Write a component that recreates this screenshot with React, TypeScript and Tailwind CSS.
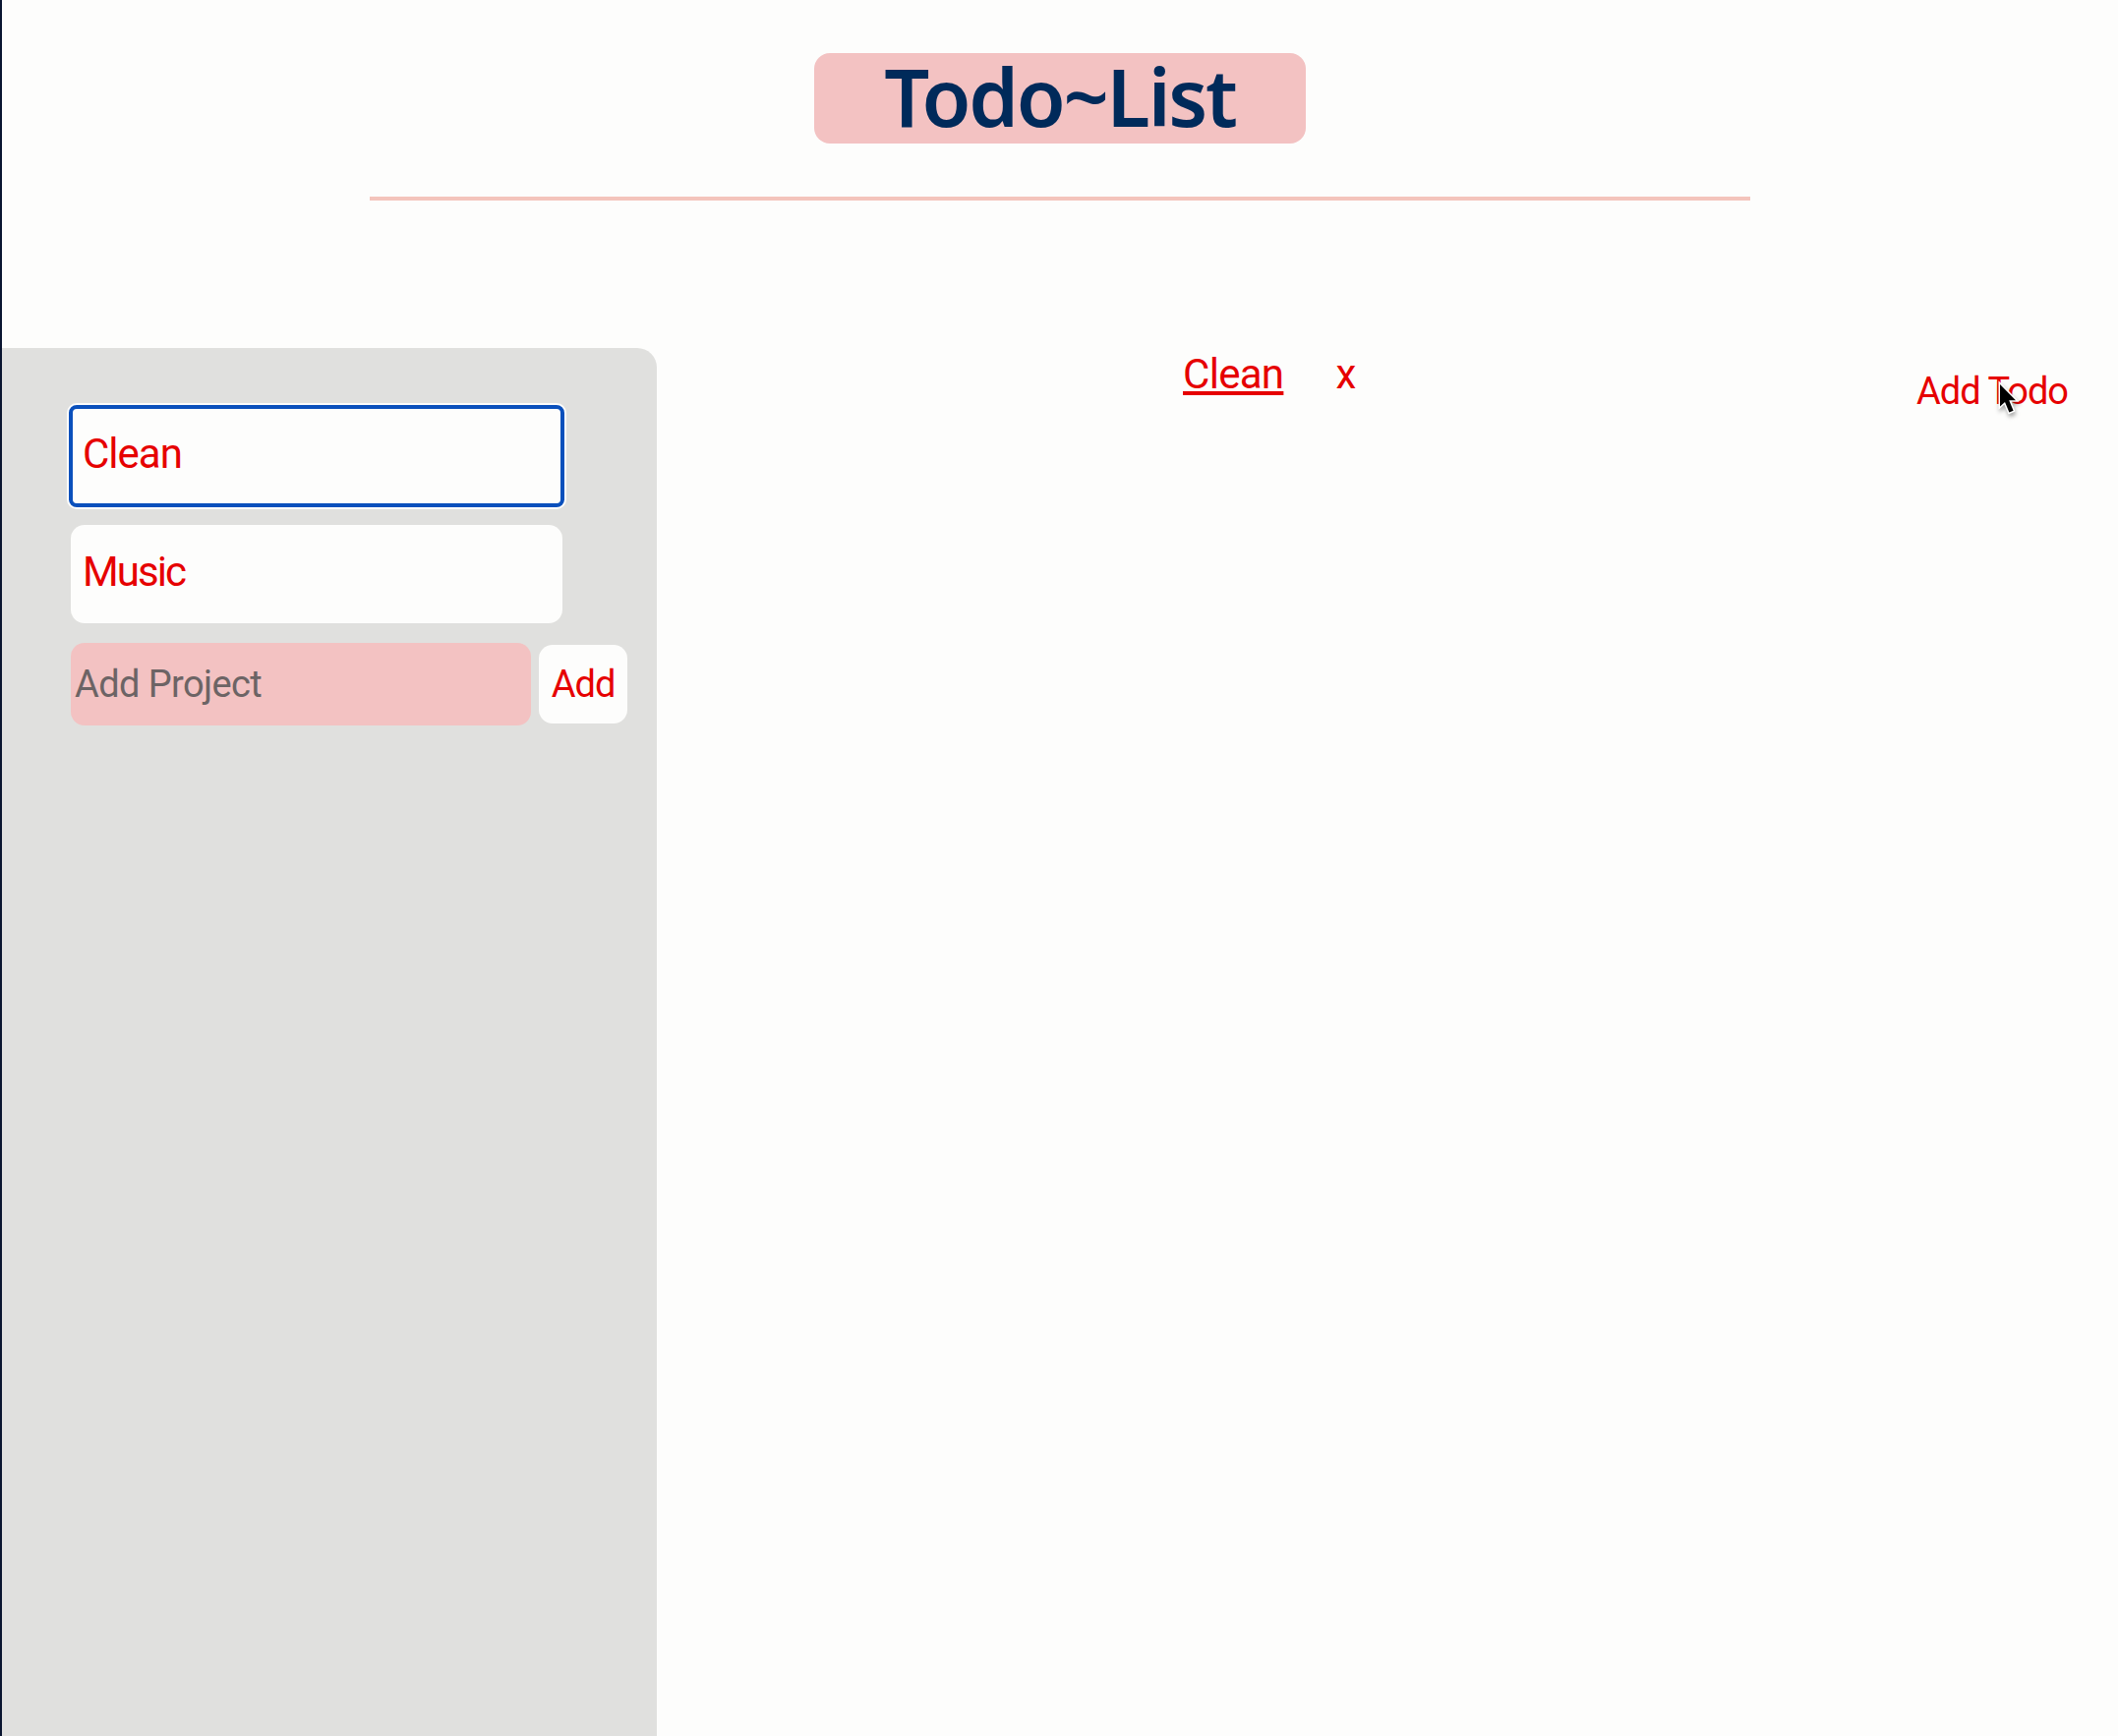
import React from "react";

function ProjectButton({ name, focused }: { name: string; focused?: boolean }) {
  return (
    <button
      className={
        "flex h-[100px] w-[500px] items-center bg-[#fdfdfc] pl-3 text-left text-[42px] leading-none text-[#e60000] " +
        (focused
          ? "rounded-[6px] tracking-[-1px] outline-4 -outline-offset-2 outline-[#0a50bc] ring-4 ring-[#fdfdfc]"
          : "rounded-[14px] tracking-[-1.9px]")
      }
    >
      <span className="-mt-1">{name}</span>
    </button>
  );
}

export default function App() {
  return (
    <div className="relative flex h-[1766px] w-[2154px] flex-col overflow-hidden border-l-2 border-[#0a1530] bg-[#fdfdfc] font-['Roboto',sans-serif] text-[#e60000]">
      <header className="flex flex-col items-center pt-[54px]">
        <h1 className="flex h-[92px] w-[500px] items-center justify-center rounded-2xl bg-[#f3c2c2] font-['Noto_Sans',sans-serif] text-[81px] leading-none font-semibold tracking-[-2.2px] text-[#002a5a]">
          <span className="-mt-1.5">Todo~List</span>
        </h1>
        <div className="mt-[54px] h-1 w-[1404px] bg-[#f4c4bc]" />
      </header>

      <main className="mt-[150px] flex grow">
        <aside className="w-[666px] rounded-tr-[20px] bg-[#e0e0de] pt-[60px] pl-[70px]">
          <div className="flex flex-col gap-5">
            <ProjectButton name="Clean" focused />
            <ProjectButton name="Music" />
            <div className="flex items-center gap-2 text-[38px] leading-none">
              <div className="flex h-[84px] w-[468px] items-center rounded-[14px] bg-[#f3c2c2] pl-1 tracking-[-0.6px] text-[#6c6465]">
                <span>Add Project</span>
              </div>
              <button className="flex h-20 w-[90px] items-center justify-center rounded-[14px] bg-[#fdfdfc] tracking-[-1px]">
                <span>Add</span>
              </button>
            </div>
          </div>
        </aside>

        <section className="flex grow items-start text-[42px] leading-none">
          <h2 className="mt-[6px] ml-[535px] tracking-[-0.7px] underline decoration-4 underline-offset-[3px]">Clean</h2>
          <button className="mt-[6px] ml-[53px]">x</button>
          <button className="relative mt-[25px] mr-[51px] ml-auto text-[38px] leading-none tracking-[-1px]">
            Add Todo
            <svg
              className="absolute top-[8px] left-[82px] drop-shadow-[1px_3px_2px_rgba(0,0,0,0.35)]"
              width="24"
              height="36"
              viewBox="-3 -4 24 36"
            >
              <path
                d="M0 0V22.5L5 18L9.4 28.5L13.6 26.7L9.2 16.2H16Z"
                fill="#000"
                stroke="#fff"
                strokeWidth="3"
                paintOrder="stroke"
              />
            </svg>
          </button>
        </section>
      </main>
    </div>
  );
}
